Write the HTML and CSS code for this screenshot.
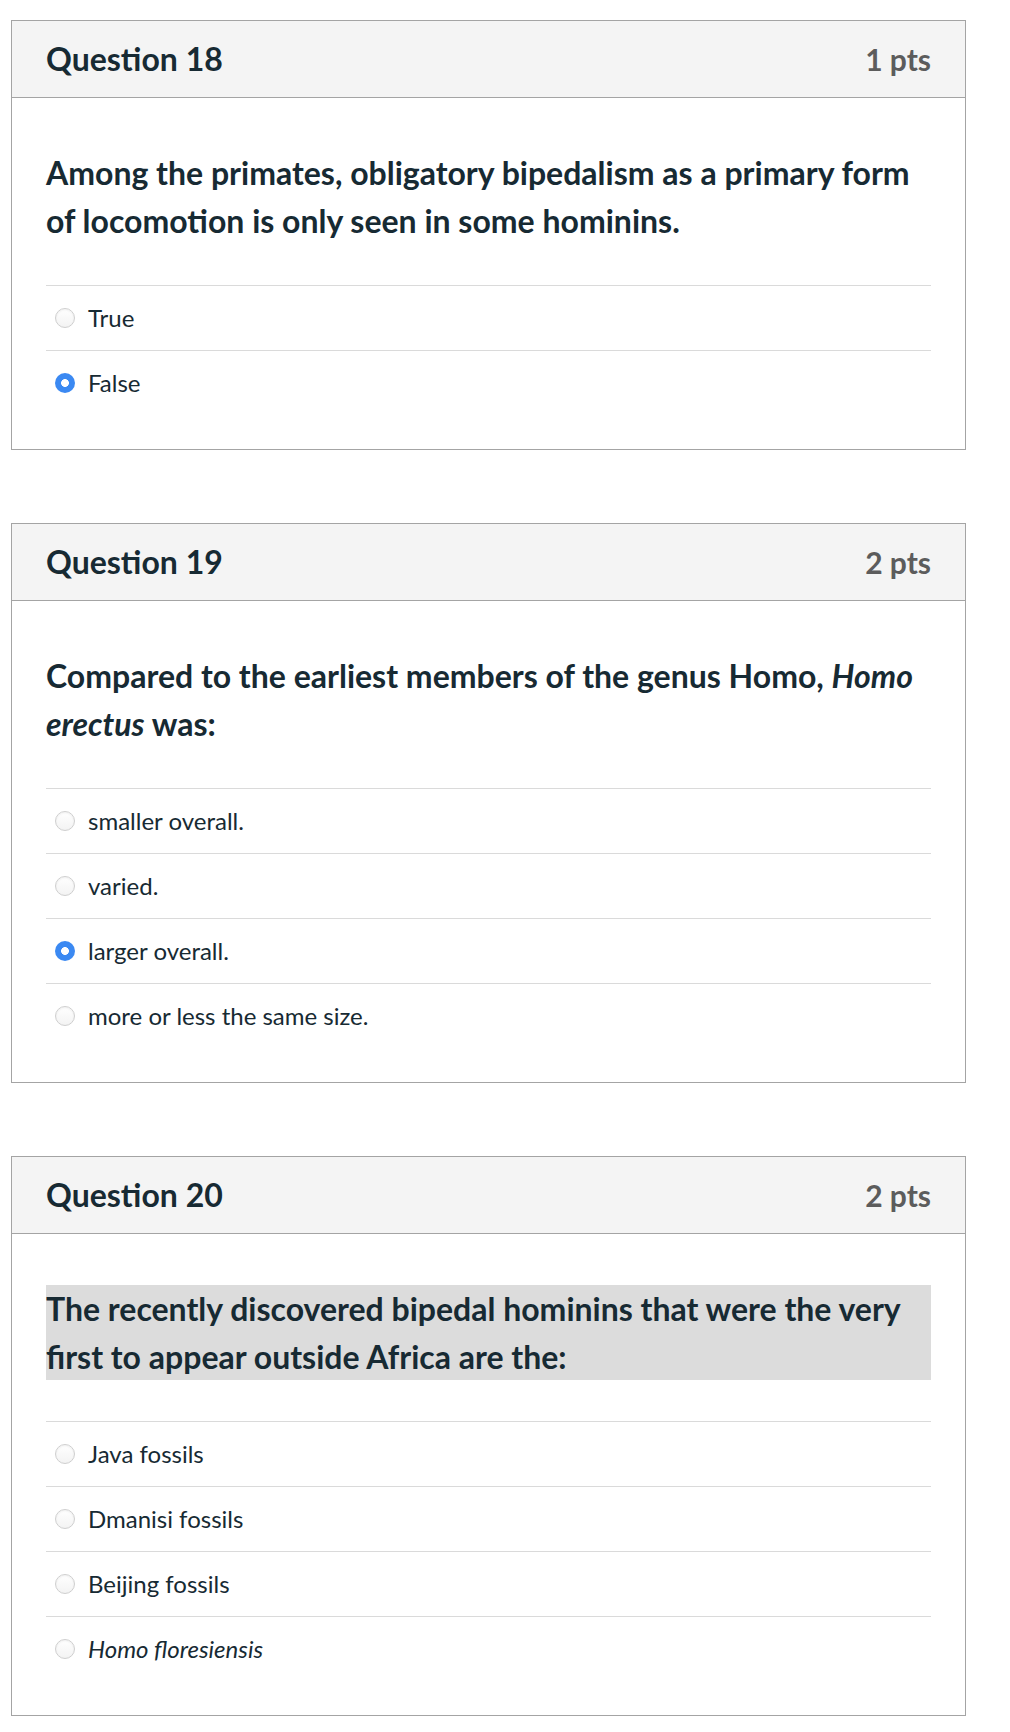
FILE: index.html
```html
<!DOCTYPE html>
<html lang="en">
<head>
<meta charset="utf-8">
<title>Quiz</title>
<link rel="stylesheet" href="styles.css">
</head>
<body>
<div class="page">
  <section class="card">
    <header class="card-head">
      <h2 class="q-title">Question 18</h2>
      <span class="pts">1 pts</span>
    </header>
    <div class="card-body">
      <p class="q-text">Among the primates, obligatory bipedalism as a primary form of locomotion is only seen in some hominins.</p>
      <ul class="answers">
        <li class="answer"><span class="radio"></span><span class="label">True</span></li>
        <li class="answer"><span class="radio checked"></span><span class="label">False</span></li>
      </ul>
    </div>
  </section>

  <section class="card">
    <header class="card-head">
      <h2 class="q-title">Question 19</h2>
      <span class="pts">2 pts</span>
    </header>
    <div class="card-body">
      <p class="q-text">Compared to the earliest members of the genus Homo, <em>Homo erectus</em> was:</p>
      <ul class="answers">
        <li class="answer"><span class="radio"></span><span class="label">smaller overall.</span></li>
        <li class="answer"><span class="radio"></span><span class="label">varied.</span></li>
        <li class="answer"><span class="radio checked"></span><span class="label">larger overall.</span></li>
        <li class="answer"><span class="radio"></span><span class="label">more or less the same size.</span></li>
      </ul>
    </div>
  </section>

  <section class="card">
    <header class="card-head">
      <h2 class="q-title">Question 20</h2>
      <span class="pts">2 pts</span>
    </header>
    <div class="card-body">
      <p class="q-text highlighted">The recently discovered bipedal hominins that were the very first to appear outside Africa are the:</p>
      <ul class="answers">
        <li class="answer"><span class="radio"></span><span class="label">Java fossils</span></li>
        <li class="answer"><span class="radio"></span><span class="label">Dmanisi fossils</span></li>
        <li class="answer"><span class="radio"></span><span class="label">Beijing fossils</span></li>
        <li class="answer"><span class="radio"></span><span class="label"><em>Homo floresiensis</em></span></li>
      </ul>
    </div>
  </section>
</div>
</body>
</html>
```

FILE: styles.css
```css
html, body {
  margin: 0;
  padding: 0;
  background: #ffffff;
}

body {
  font-family: Lato, "Open Sans", "Liberation Sans", sans-serif;
  color: #172a33;
}

.page {
  display: flex;
  flex-direction: column;
  gap: 73px;
  padding: 20px 0 0 11px;
}

.card {
  width: 955px;
  box-sizing: border-box;
  border: 1px solid #a4a4a4;
  background: #ffffff;
}

.card-head {
  height: 77px;
  box-sizing: border-box;
  display: flex;
  align-items: center;
  justify-content: space-between;
  padding: 0 34px;
  background: #f4f4f4;
  border-bottom: 1px solid #a4a4a4;
}

.q-title {
  margin: 0;
  font-size: 32px;
  font-weight: 700;
  line-height: 40px;
  color: #172a33;
}

.pts {
  font-size: 30px;
  font-weight: 700;
  line-height: 40px;
  color: #5c5c5c;
}

.card-body {
  padding: 51px 34px 34px;
}

.q-text {
  margin: 0;
  font-size: 32px;
  font-weight: 700;
  line-height: 47.5px;
}

.q-text.highlighted {
  background: #dcdcdc;
}

.answers {
  list-style: none;
  margin: 41px 0 0;
  padding: 0;
}

.answer {
  height: 65px;
  box-sizing: border-box;
  display: flex;
  align-items: center;
  gap: 13px;
  padding-left: 9px;
  border-top: 1px solid #dadada;
}

.radio {
  width: 20px;
  height: 20px;
  box-sizing: border-box;
  border-radius: 50%;
  border: 1px solid #cfcfcf;
  background: linear-gradient(#ffffff, #f3f3f3);
  box-shadow: inset 0 1px 2px rgba(0, 0, 0, 0.06);
  flex: none;
}

.radio.checked {
  border: none;
  box-shadow: none;
  background: radial-gradient(circle, #ffffff 0, #ffffff 3.6px, #3b89f2 4.2px);
}

.label {
  font-size: 24px;
  font-weight: 400;
  line-height: 30px;
  color: #172a33;
}
```
